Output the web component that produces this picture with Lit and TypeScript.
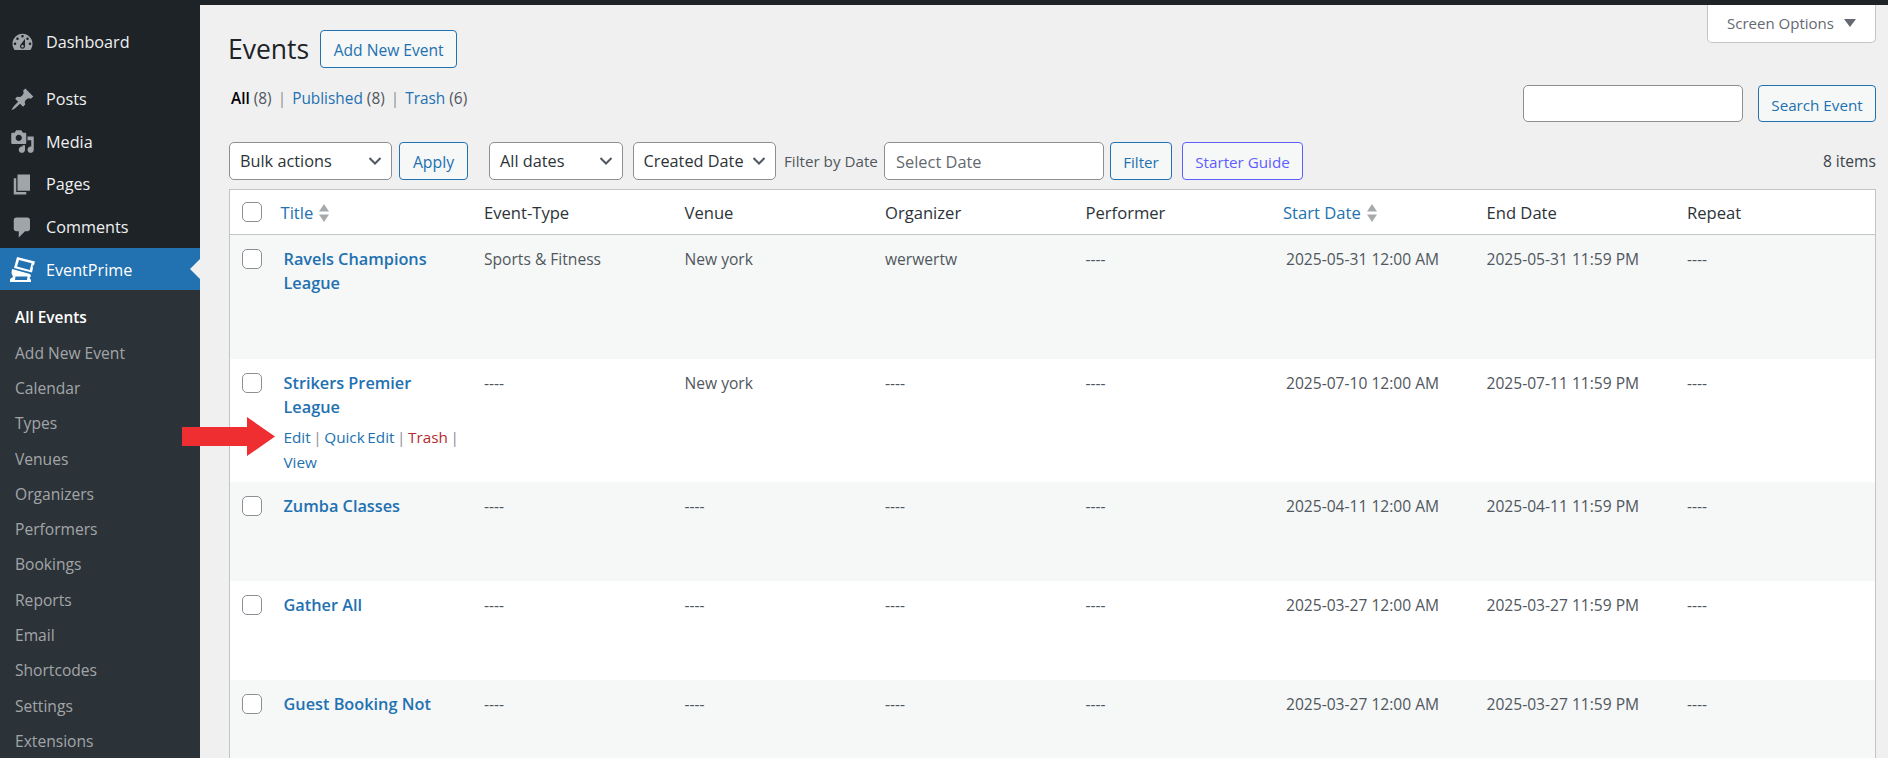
import { LitElement, html, css, svg } from "lit";
import { customElement } from "lit/decorators.js";

const ICONS: Record<string, any> = {
  dashboard: svg`<path fill-rule="evenodd" d="M3.76 16h12.48c1.1-1.37 1.76-3.11 1.76-5 0-4.42-3.58-8-8-8s-8 3.58-8 8c0 1.89.66 3.63 1.76 5zM10 4c.55 0 1 .45 1 1s-.45 1-1 1-1-.45-1-1 .45-1 1-1zM6 6c.55 0 1 .45 1 1s-.45 1-1 1-1-.45-1-1 .45-1 1-1zm8 0c.55 0 1 .45 1 1s-.45 1-1 1-1-.45-1-1 .45-1 1-1zm-5.37 5.55L12 7v6c0 1.1-.9 2-2 2s-2-.9-2-2c0-.57.24-1.08.63-1.45zM4 10c.55 0 1 .45 1 1s-.45 1-1 1-1-.45-1-1 .45-1 1-1zm12 0c.55 0 1 .45 1 1s-.45 1-1 1-1-.45-1-1 .45-1 1-1zm-5 3c0-.55-.45-1-1-1s-1 .45-1 1 .45 1 1 1 1-.45 1-1z"/>`,
  post: svg`<path d="M10.44 3.02l1.82-1.82 6.36 6.35-1.83 1.82c-1.05-.68-2.48-.57-3.41.36l-.75.75c-.92.93-1.04 2.35-.35 3.41l-1.83 1.82-2.41-2.41-2.8 2.79c-.42.42-3.38 2.71-3.8 2.29s1.86-3.39 2.28-3.81l2.79-2.79L4.1 9.36l1.83-1.82c1.05.69 2.48.57 3.4-.36l.75-.75c.93-.92 1.05-2.35.36-3.41z"/>`,
  media: svg`<path fill-rule="evenodd" d="M13 11V4c0-.55-.45-1-1-1h-1.67L9 1H5L3.67 3H2c-.55 0-1 .45-1 1v7c0 .55.45 1 1 1h10c.55 0 1-.45 1-1zM7 4.5c1.38 0 2.5 1.12 2.5 2.5S8.38 9.5 7 9.5 4.5 8.38 4.5 7 5.62 4.5 7 4.5zM14 6h5v10.5c0 1.38-1.12 2.5-2.5 2.5S14 17.88 14 16.5s1.12-2.5 2.5-2.5c.17 0 .34.02.5.05V9h-3V6zm-4 8.05V13h2v3.5c0 1.38-1.12 2.5-2.5 2.5S7 17.88 7 16.5 8.12 14 9.5 14c.17 0 .34.02.5.05z"/>`,
  page: svg`<path d="M6 15V2h10v13H6zm-1 1h8v2H3V5h2v11z"/>`,
  comment: svg`<path d="M5 2h9c1.1 0 2 .9 2 2v7c0 1.1-.9 2-2 2h-2l-5 5v-5H5c-1.1 0-2-.9-2-2V4c0-1.1.9-2 2-2z"/>`,
};
const TICKET = svg`<path fill="#fff" fill-rule="evenodd" d="M7 0 25 4.5 24 8 22.5 9 23 11 22 15.5 4 11zM9 3 21.5 6.2 19.8 13 7 9.5z"/><path fill="#fff" fill-rule="evenodd" d="M2 12 20 17 21 19 19.5 21 21 23 21 25 0 25 0 22 3 20 1.5 16zM5.5 19.5 17.5 19.5 17 23 5 23z"/>`;

const NAV = [
  { label: "Dashboard", icon: "dashboard", cls: "dash" },
  { label: "Posts", icon: "post", cls: "" },
  { label: "Media", icon: "media", cls: "" },
  { label: "Pages", icon: "page", cls: "" },
  { label: "Comments", icon: "comment", cls: "" },
];
const SUB = ["Add New Event","Calendar","Types","Venues","Organizers","Performers","Bookings","Reports","Email","Shortcodes","Settings","Extensions"];
const D = "----";
const ROWS = [
  { t: ["Ravels Champions", "League"], c: ["Sports & Fitness", "New york", "werwertw", D], s: "2025-05-31 12:00 AM", e: "2025-05-31 11:59 PM", h: "r1", act: false },
  { t: ["Strikers Premier", "League"], c: [D, "New york", D, D], s: "2025-07-10 12:00 AM", e: "2025-07-11 11:59 PM", h: "r2", act: true },
  { t: ["Zumba Classes"], c: [D, D, D, D], s: "2025-04-11 12:00 AM", e: "2025-04-11 11:59 PM", h: "r3", act: false },
  { t: ["Gather All"], c: [D, D, D, D], s: "2025-03-27 12:00 AM", e: "2025-03-27 11:59 PM", h: "r3", act: false },
  { t: ["Guest Booking Not"], c: [D, D, D, D], s: "2025-03-27 12:00 AM", e: "2025-03-27 11:59 PM", h: "r3", act: false },
];

const chevron = html`<svg class="chev" viewBox="0 0 14 10" width="14" height="10"><path d="M1.5 2 7 7.5 12.5 2" fill="none" stroke="#50575e" stroke-width="2"/></svg>`;
const sorter = html`<svg class="sort" viewBox="0 0 10 18" width="10" height="18"><path d="M5 0 10 7.5H0z" fill="#a7aaad"/><path d="M5 18 10 10.5H0z" fill="#a7aaad"/></svg>`;

@customElement("app-root")
export class AppRoot extends LitElement {
  static styles = css`
    :host { display: block; height: 758px; overflow: hidden; position: relative; background: #f0f0f1;
      font-family: "Open Sans", "Noto Sans", sans-serif; font-size: 15.6px; color: #3c434a; }
    * { box-sizing: border-box; }
    .top { height: 5px; background: #1d2327; }
    .wrap { display: flex; height: 753px; }
    .side { width: 200px; flex: none; background: #1d2327; padding-top: 16px; }
    .nav { display: flex; align-items: center; height: 42.6px; color: #f0f0f1; font-size: 16.2px; padding-left: 10px; gap: 11px; }
    .nav svg { width: 25px; height: 25px; fill: #a0a5aa; flex: none; }
    .nav.dash { height: 42.6px; margin-bottom: 14.4px; }
    .nav.active { background: #2271b1; color: #fff; position: relative; height: 42px; }
    .nav.active span { padding-top: 1px; }
    .nav.active::after { content: ""; position: absolute; right: 0; top: 50%; margin-top: -10px; border: 10px solid transparent; border-right-color: #f0f0f1; border-left: 0; }
    .sub { background: #2c3338; padding-top: 10px; height: 470px; }
    .sub div { height: 35.3px; line-height: 35.3px; padding-left: 15px; color: #c3c4c7cc; font-size: 15.6px; white-space: nowrap; }
    .sub .cur { color: #fff; font-weight: 600; font-size: 15.4px; }
    .main { flex: 1; min-width: 0; padding: 0 12px 0 29px; }
    .head { display: flex; align-items: flex-start; height: 68px; }
    .title { display: flex; align-items: center; padding-top: 25px; }
    h1 { margin: 0 11px 0 -1px; font-size: 26.5px; font-weight: 400; color: #1d2327; line-height: 38px; }
    .btn { display: flex; align-items: center; justify-content: center; height: 38px; padding-top: 1px; border: 1px solid #2271b1; border-radius: 4px; background: #f6f7f7; color: #2271b1; font-size: 15.2px; white-space: nowrap; }
    .add { width: 137px; font-size: 15.6px; }
    .opts { margin-left: auto; width: 169px; height: 38px; padding-bottom: 2px; background: #fff; border: 1px solid #c3c4c7; border-top: 0; border-radius: 0 0 5px 5px; display: flex; align-items: center; justify-content: center; gap: 10px; color: #646970; font-size: 15px; }
    .opts svg { width: 12px; height: 8px; fill: #646970; }
    .views { display: flex; margin-top: 12px; height: 37px; }
    .links { margin: 2px 0 0 2px; line-height: 24px; color: #50575e; display: flex; gap: 6px; white-space: nowrap; font-size: 15.4px; }
    .links b { font-weight: 600; color: #000; }
    .links a { color: #2271b1; }
    .links i { font-style: normal; color: #8c8f94; }
    .search { margin-left: auto; display: flex; gap: 15px; }
    .inp { background: #fff; border: 1px solid #8c8f94; border-radius: 5px; height: 37px; width: 220px; display: flex; align-items: center; padding-left: 11px; color: #646970; font-size: 16.4px; }
    .search .btn { width: 118px; height: 37px; padding-top: 2px; }
    .tools { display: flex; align-items: center; margin-top: 20px; height: 38px; }
    .sel { display: flex; align-items: center; justify-content: space-between; height: 38px; background: #fff; border: 1px solid #8c8f94; border-radius: 5px; padding: 0 9px 0 10px; color: #2c3338; font-size: 16.3px; white-space: nowrap; }
    .chev { flex: none; }
    .bulk { width: 162.5px; margin-right: 7.5px; }
    .apply { width: 69px; margin-right: 21px; font-size: 15.8px; }
    .dates { width: 133.5px; margin-right: 10px; }
    .created { width: 143.5px; margin-right: 8px; }
    .lab { width: 94px; margin-right: 6px; white-space: nowrap; color: #50575e; font-size: 15.2px; }
    .tools .inp { height: 38px; }
    .filter { width: 62px; margin: 0 10px 0 6px; color: #2271b1; }
    .guide { width: 121px; border-color: #5e5eff; color: #5e5eff; }
    .count { margin-left: auto; color: #3c434a; }
    table { width: 100%; margin-top: 9px; border-collapse: separate; border-spacing: 0; table-layout: fixed; border: 1px solid #c3c4c7; background: #fff; }
    .c0 { width: 41px; }
    th { height: 45px; font-weight: 400; font-size: 16.6px; text-align: left; padding: 1px 12.5px 0; color: #2c3338; border-bottom: 1px solid #c3c4c7; white-space: nowrap; }
    th.s { color: #2271b1; padding-left: 9.5px; }
    th .in { display: flex; align-items: center; gap: 6px; }
    td { vertical-align: top; padding: 11.5px 12.5px 0; line-height: 24.4px; font-size: 15.6px; color: #50575e; white-space: nowrap; }
    tr.alt td { background: #f6f7f7; }
    td:first-child, th:first-child { padding: 0 0 0 12px; }
    td:first-child { padding-top: 14px; }
    .cb { display: block; width: 20px; height: 20px; background: #fff; border: 1px solid #8c8f94; border-radius: 5px; }
    .r1 td { height: 124px; } .r2 td { height: 123px; } .r3 td { height: 99px; }
    .name { color: #2271b1; font-weight: 600; font-size: 16.3px; line-height: 24.5px; }
    .acts { color: #2271b1; margin-top: 5px; line-height: 25px; font-size: 15.3px; word-spacing: -1.4px; }
    .acts i { font-style: normal; color: #8c8f94; }
    .acts em { font-style: normal; color: #b32d2e; }
    .arrow { position: absolute; left: 182px; top: 417px; width: 93px; height: 39px; }
  `;

  render() {
    return html`
      <div class="top"></div>
      <div class="wrap">
        <aside class="side">
          ${NAV.map(n => html`<div class="nav ${n.cls}"><svg viewBox="0 0 20 20">${ICONS[n.icon]}</svg><span>${n.label}</span></div>`)}
          <div class="nav active"><svg viewBox="0 0 25 25">${TICKET}</svg><span>EventPrime</span></div>
          <div class="sub"><div class="cur">All Events</div>${SUB.map(s => html`<div>${s}</div>`)}</div>
        </aside>
        <main class="main">
          <div class="head">
            <div class="title"><h1>Events</h1><div class="btn add">Add New Event</div></div>
            <div class="opts">Screen Options <svg viewBox="0 0 12 8"><path d="M0 0h12L6 8z"/></svg></div>
          </div>
          <div class="views">
            <div class="links"><span><b>All</b> (8)</span><i>|</i><span><a>Published</a> (8)</span><i>|</i><span><a>Trash</a> (6)</span></div>
            <div class="search"><div class="inp"></div><div class="btn">Search Event</div></div>
          </div>
          <div class="tools">
            <div class="sel bulk">Bulk actions ${chevron}</div>
            <div class="btn apply">Apply</div>
            <div class="sel dates">All dates ${chevron}</div>
            <div class="sel created">Created Date ${chevron}</div>
            <div class="lab">Filter by Date</div>
            <div class="inp">Select Date</div>
            <div class="btn filter">Filter</div>
            <div class="btn guide">Starter Guide</div>
            <div class="count">8 items</div>
          </div>
          <table>
            <colgroup><col class="c0" /><col span="8" /></colgroup>
            <thead><tr>
              <th><span class="cb"></span></th>
              <th class="s"><div class="in">Title ${sorter}</div></th>
              <th>Event-Type</th><th>Venue</th><th>Organizer</th><th>Performer</th>
              <th class="s"><div class="in">Start Date ${sorter}</div></th>
              <th>End Date</th><th>Repeat</th>
            </tr></thead>
            <tbody>
              ${ROWS.map((r, i) => html`<tr class="${r.h} ${i % 2 === 0 ? "alt" : ""}">
                <td><span class="cb"></span></td>
                <td><div class="name">${r.t.map((l, j) => html`${j ? html`<br />` : ""}${l}`)}</div>
                  ${r.act ? html`<div class="acts">Edit <i>|</i> Quick Edit <i>|</i> <em>Trash</em> <i>|</i><br />View</div>` : ""}</td>
                ${r.c.map(c => html`<td>${c}</td>`)}
                <td>${r.s}</td><td>${r.e}</td><td>${D}</td>
              </tr>`)}
            </tbody>
          </table>
        </main>
      </div>
      <svg class="arrow" viewBox="0 0 93 39"><path d="M0 10H65V0L93 19.5 65 39V29H0z" fill="#ee2e31"/></svg>
    `;
  }
}
